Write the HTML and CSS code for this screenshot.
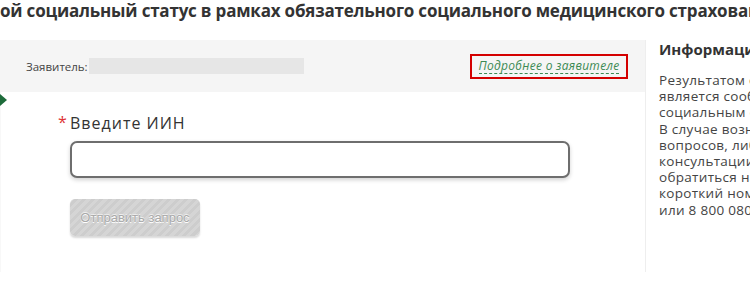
FILE: index.html
```html
<!DOCTYPE html>
<html lang="ru">
<head>
<meta charset="utf-8">
<link rel="stylesheet" href="styles.css">
</head>
<body>
<h1 class="title">ой социальный статус в рамках обязательного социального медицинского страхования</h1>
<div class="layout">
  <div class="main">
    <div class="applicant">
      <span class="applicant-label">Заявитель:</span>
      <span class="applicant-value"></span>
      <span class="spacer"></span>
      <span class="details-box"><a class="details-link" href="#">Подробнее о заявителе</a></span>
    </div>
    <span class="marker"></span>
    <form class="form">
      <label class="field-label"><span class="req">*</span>Введите ИИН</label>
      <input class="field-input" type="text">
      <button class="submit" type="button" disabled>Отправить запрос</button>
    </form>
  </div>
  <aside class="side">
    <h2 class="side-title">Информация</h2>
    <p class="side-text">Результатом оказания<br>является сообщение о<br>социальным статусе.<br>В случае возникновения<br>вопросов, либо для<br>консультации необходимо<br>обратиться на<br>короткий номер 1414<br>или 8 800 080 7777</p>
  </aside>
</div>
</body>
</html>
```
FILE: styles.css
```css
html, body {
  margin: 0;
  padding: 0;
  background: #fff;
  font-family: "Open Sans", "Noto Sans", sans-serif;
  color: #333;
  overflow: hidden;
}
.title {
  margin: 0;
  height: 40px;
  line-height: 22px;
  font-size: 17px;
  font-weight: 700;
  color: #333;
  white-space: nowrap;
  overflow: hidden;
  letter-spacing: -0.2px;
}
.layout {
  display: flex;
  align-items: flex-start;
}
.main {
  position: relative;
  width: 645px;
  flex: none;
  height: 232px;
  border-left: 1px solid #f8f8f8;
  box-sizing: border-box;
}
.applicant {
  display: flex;
  align-items: center;
  height: 52px;
  background: #f5f5f5;
  padding: 0 17px 0 26px;
  margin-left: -1px;
}
.applicant-label {
  font-size: 11.5px;
  color: #444;
  margin-top: 1px;
}
.applicant-value {
  width: 215px;
  height: 16px;
  background: #e6e6e6;
  margin-left: 1px;
}
.spacer { flex: 1; }
.details-box {
  display: flex;
  align-items: center;
  justify-content: center;
  width: 158px;
  height: 25px;
  box-sizing: border-box;
  border: 2px solid #d40000;
  margin-top: 1px;
}
.details-link {
  font-size: 12px;
  font-style: italic;
  color: #3c8a54;
  text-decoration: none;
  border-bottom: 1px dashed #3c8a54;
  line-height: 14px;
  letter-spacing: 0.3px;
}
.marker {
  position: absolute;
  left: -1px;
  top: 54px;
  width: 0;
  height: 0;
  border-top: 6px solid transparent;
  border-bottom: 6px solid transparent;
  border-left: 7px solid #1d6b3a;
}
.form {
  display: flex;
  flex-direction: column;
  align-items: flex-start;
  padding: 20px 0 0 69px;
}
.field-label {
  position: relative;
  font-size: 16px;
  line-height: 22px;
  letter-spacing: 1px;
  color: #333;
}
.req {
  position: absolute;
  left: -12px;
  top: -1px;
  color: #d33;
  font-size: 16px;
}
.field-input {
  margin-top: 7px;
  width: 500px;
  height: 37px;
  box-sizing: border-box;
  border: 2px solid #6e6e6e;
  border-radius: 7px;
  box-shadow: 0 2px 4px rgba(0, 0, 0, 0.18);
  background: #fff;
  outline: none;
}
.submit {
  margin-top: 21px;
  width: 130px;
  height: 37px;
  border: none;
  border-radius: 5px;
  background: repeating-linear-gradient(135deg, #d5d5d5 0 3px, #cdcdcd 3px 6px);
  box-shadow: 0 2px 2px rgba(0, 0, 0, 0.15);
  color: #a9a9a9;
  text-shadow: 0 1px 0 #fff, 0 -1px 0 #eee;
  font-family: "Liberation Sans", Arial, sans-serif;
  font-size: 13px;
  padding: 0;
}
.side {
  flex: 1;
  min-width: 0;
  border-left: 1px solid #eeeeee;
  padding-left: 13px;
  height: 232px;
  box-sizing: border-box;
  overflow: hidden;
}
.side-title {
  margin: 0;
  font-size: 15px;
  font-weight: 700;
  line-height: 18px;
  white-space: nowrap;
}
.side-text {
  margin: 14px 0 0;
  white-space: nowrap;
  font-size: 13.5px;
  letter-spacing: 0.3px;
  line-height: 16.2px;
  color: #444;
}
```
